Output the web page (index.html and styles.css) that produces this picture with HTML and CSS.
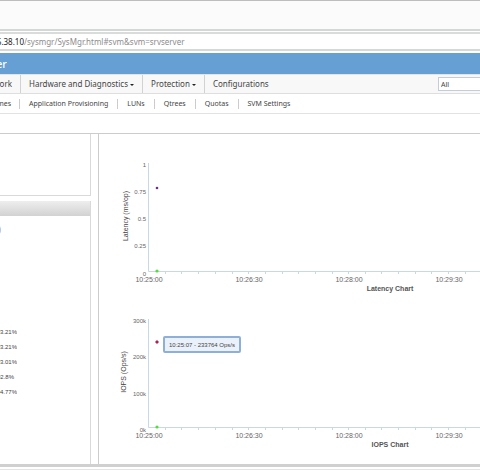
FILE: index.html
```html
<!DOCTYPE html>
<html lang="en">
<head>
<meta charset="UTF-8" />
<meta name="viewport" content="width=device-width, initial-scale=1" />
<title>System Manager</title>
<link rel="stylesheet" href="styles.css">
</head>
<body>
<div class="tab-strip"></div>
<div class="address-bar"><span class="host clip">6.38.10</span><span>/sysmgr/SysMgr.html#svm&amp;svm=srvserver</span></div>
<header><span class="clip">er</span></header>
<nav class="main-nav">
  <a class="clip" href="#network">ork</a>
  <a href="#hardware">Hardware and Diagnostics <i class="caret"></i></a>
  <a href="#protection">Protection <i class="caret"></i></a>
  <a href="#configurations">Configurations</a>
  <input type="text" class="search" value="All" aria-label="Search scope" />
</nav>
<nav class="sub-nav">
  <a class="clip" href="#volumes">mes</a>
  <a href="#provisioning">Application Provisioning</a>
  <a href="#luns">LUNs</a>
  <a href="#qtrees">Qtrees</a>
  <a href="#quotas">Quotas</a>
  <a href="#settings">SVM Settings</a>
</nav>
<main>
  <aside>
    <section class="box box-top"></section>
    <section class="box box-details">
      <div class="box-header"></div>
      <div class="note clip">)</div>
      <ul class="percents">
        <li>93.21%</li>
        <li>93.21%</li>
        <li>93.01%</li>
        <li>92.8%</li>
        <li>94.77%</li>
      </ul>
    </section>
  </aside>
  <section class="charts">
    <svg class="chart" role="img" aria-label="Latency Chart">
      <path class="axis" d="M49.5 21V129.5H400" />
      <path class="axis" d="M66.5 130v2M82.5 130v2M99.5 130v2M116.5 130v2M133.5 130v2M149.5 130v2M166.5 130v2M183.5 130v2M199.5 130v2M216.5 130v2M233.5 130v2M249.5 130v2M266.5 130v2M282.5 130v2M299.5 130v2M316.5 130v2M332.5 130v2M349.5 130v2M366.5 130v2" />
      <g class="y-labels">
        <text x="47" y="25">1</text>
        <text x="47" y="52">0.75</text>
        <text x="47" y="79">0.5</text>
        <text x="47" y="106">0.25</text>
        <text x="47" y="134">0</text>
      </g>
      <g class="x-labels">
        <text x="50" y="140">10:25:00</text>
        <text x="150" y="140">10:26:30</text>
        <text x="250" y="140">10:28:00</text>
        <text x="350" y="140">10:29:30</text>
      </g>
      <text class="y-title" transform="translate(29 74) rotate(-90)">Latency (ms/op)</text>
      <text class="title" x="291" y="149">Latency Chart</text>
      <circle class="dot-latency" cx="58" cy="46" r="1.3" />
      <circle class="dot-zero" cx="58" cy="129" r="1.6" />
    </svg>
    <svg class="chart" role="img" aria-label="IOPS Chart">
      <path class="axis" d="M49.5 21V129.5H400" />
      <path class="axis" d="M66.5 130v2M82.5 130v2M99.5 130v2M116.5 130v2M133.5 130v2M149.5 130v2M166.5 130v2M183.5 130v2M199.5 130v2M216.5 130v2M233.5 130v2M249.5 130v2M266.5 130v2M282.5 130v2M299.5 130v2M316.5 130v2M332.5 130v2M349.5 130v2M366.5 130v2" />
      <g class="y-labels">
        <text x="47" y="25">300k</text>
        <text x="47" y="61">200k</text>
        <text x="47" y="98">100k</text>
        <text x="47" y="134">0k</text>
      </g>
      <g class="x-labels">
        <text x="50" y="140">10:25:00</text>
        <text x="150" y="140">10:26:30</text>
        <text x="250" y="140">10:28:00</text>
        <text x="350" y="140">10:29:30</text>
      </g>
      <text class="y-title" transform="translate(27 74) rotate(-90)">IOPS (Ops/s)</text>
      <text class="title" x="291" y="149">IOPS Chart</text>
      <path class="dot-iops" d="M58 42l2 2-2 2-2-2z" />
      <circle class="dot-zero" cx="58" cy="129" r="1.6" />
      <rect class="tip" x="65" y="39" width="76" height="15" rx="1" />
      <text class="tip-text" x="103" y="49">10:25:07 - 233764 Ops/s</text>
    </svg>
  </section>
</main>
<footer></footer>
</body>
</html>
```

FILE: styles.css
```css
* {
  box-sizing: border-box;
}
body {
  font-family: "Noto Sans", "Open Sans", sans-serif;
  font-size: 8px;
  background: #fff;
  color: #444;
  margin: 0;
}
a {
  color: inherit;
  text-decoration: none;
}
/* text that scrolls off the left edge */
.clip {
  display: flex;
  justify-content: flex-end;
  overflow: hidden;
}
.tab-strip {
  height: 31px;
  margin-bottom: 1px;
  background: #fbfbfb;
  border-top: 1px solid #bdbdbd;
  border-bottom: 2px solid #d3d7d7;
}
.address-bar {
  display: flex;
  align-items: center;
  height: 19px;
  margin-bottom: 2px;
  border-top: 2px solid #dadcdc;
  border-bottom: 2px solid #d6d8d8;
  color: #8c8c8c;
}
.host {
  width: 24px;
  color: #222;
}
header {
  display: flex;
  align-items: center;
  height: 21px;
  background: #659fd3;
  color: #fff;
  font-size: 11px;
  font-weight: 500;
}
header .clip {
  width: 7px;
}
.main-nav,
.sub-nav {
  display: flex;
  align-items: center;
  height: 20px;
  white-space: nowrap;
}
.main-nav {
  background: #f8f8f8;
  border-top: 1px solid #e4e4e4;
  border-bottom: 1px solid #dedede;
}
.main-nav a {
  line-height: 18px;
  padding: 0 8px;
  border-right: 1px solid #d2d2d2;
}
.main-nav a:nth-of-type(4) {
  border: 0;
}
.main-nav a.clip {
  width: 21px;
  padding-left: 0;
}
.caret {
  display: inline-block;
  vertical-align: middle;
  border: 2px solid transparent;
  border-top-color: #222;
  border-bottom: 0;
}
.search {
  flex: none;
  width: 60px;
  height: 14px;
  margin-left: auto;
  margin-right: -18px;
  padding: 0 2px;
  border: 1px solid #c5cbd8;
  background: #fff;
  color: #444;
  font: 7px "Noto Sans", sans-serif;
}
.sub-nav {
  border-bottom: 1px solid #e2e2e2;
  font-size: 7px;
}
.sub-nav a {
  line-height: 10px;
  padding: 0 9px;
  border-right: 1px solid #ccc;
}
.sub-nav a:last-child {
  border: 0;
}
.sub-nav a.clip {
  width: 20px;
  padding: 0 8px 0 0;
}
main {
  display: flex;
  margin-top: 19px;
  border-top: 1px solid #ccc;
}
aside {
  display: flex;
  flex-direction: column;
  gap: 5px;
  flex: none;
  width: 91px;
  margin-right: 7px;
}
.box {
  border-right: 1px solid #d9d9d9;
}
.box-top {
  height: 62px;
  border-bottom: 1px solid #d9d9d9;
}
.box-details {
  flex: 1;
}
.box-header {
  height: 15px;
  background: linear-gradient(#eee, #d2d2d2);
}
.note {
  width: 1px;
  margin-top: 8px;
  line-height: 12px;
  color: #999;
}
.percents {
  list-style: none;
  width: 17px;
  margin: 89px 0 0;
  padding: 0;
  overflow: hidden;
  font: 6px/15px "Liberation Sans", sans-serif;
}
.percents li {
  display: flex;
  justify-content: flex-end;
}
.percents li:nth-child(4) {
  padding-right: 3px;
}
.charts {
  flex: 1;
  min-width: 0;
  padding: 8px 0 10px;
  border-left: 1px solid #ccc;
}
.chart {
  display: block;
  width: 100%;
  height: 156px;
  font-family: "Liberation Sans", Arial, sans-serif;
  fill: #666;
}
.axis {
  fill: none;
  stroke: #c9d8e6;
}
.y-labels {
  font-size: 6px;
  text-anchor: end;
}
.x-labels {
  font-size: 7px;
  text-anchor: middle;
}
.y-title {
  font-size: 7px;
  text-anchor: middle;
  fill: #444;
}
.title {
  font-size: 7px;
  font-weight: 700;
  text-anchor: middle;
  fill: #555;
}
.dot-latency {
  fill: #6b2c91;
}
.dot-iops {
  fill: #b02050;
}
.dot-zero {
  fill: #4fe03a;
}
.tip {
  fill: #eaf1fa;
  stroke: #8eafd8;
  stroke-width: 2;
}
.tip-text {
  font-size: 6px;
  text-anchor: middle;
  fill: #444;
}
footer {
  height: 6px;
  border-top: 3px solid #d0d0d0;
  border-bottom: 1px solid #e4e4e4;
}
```
